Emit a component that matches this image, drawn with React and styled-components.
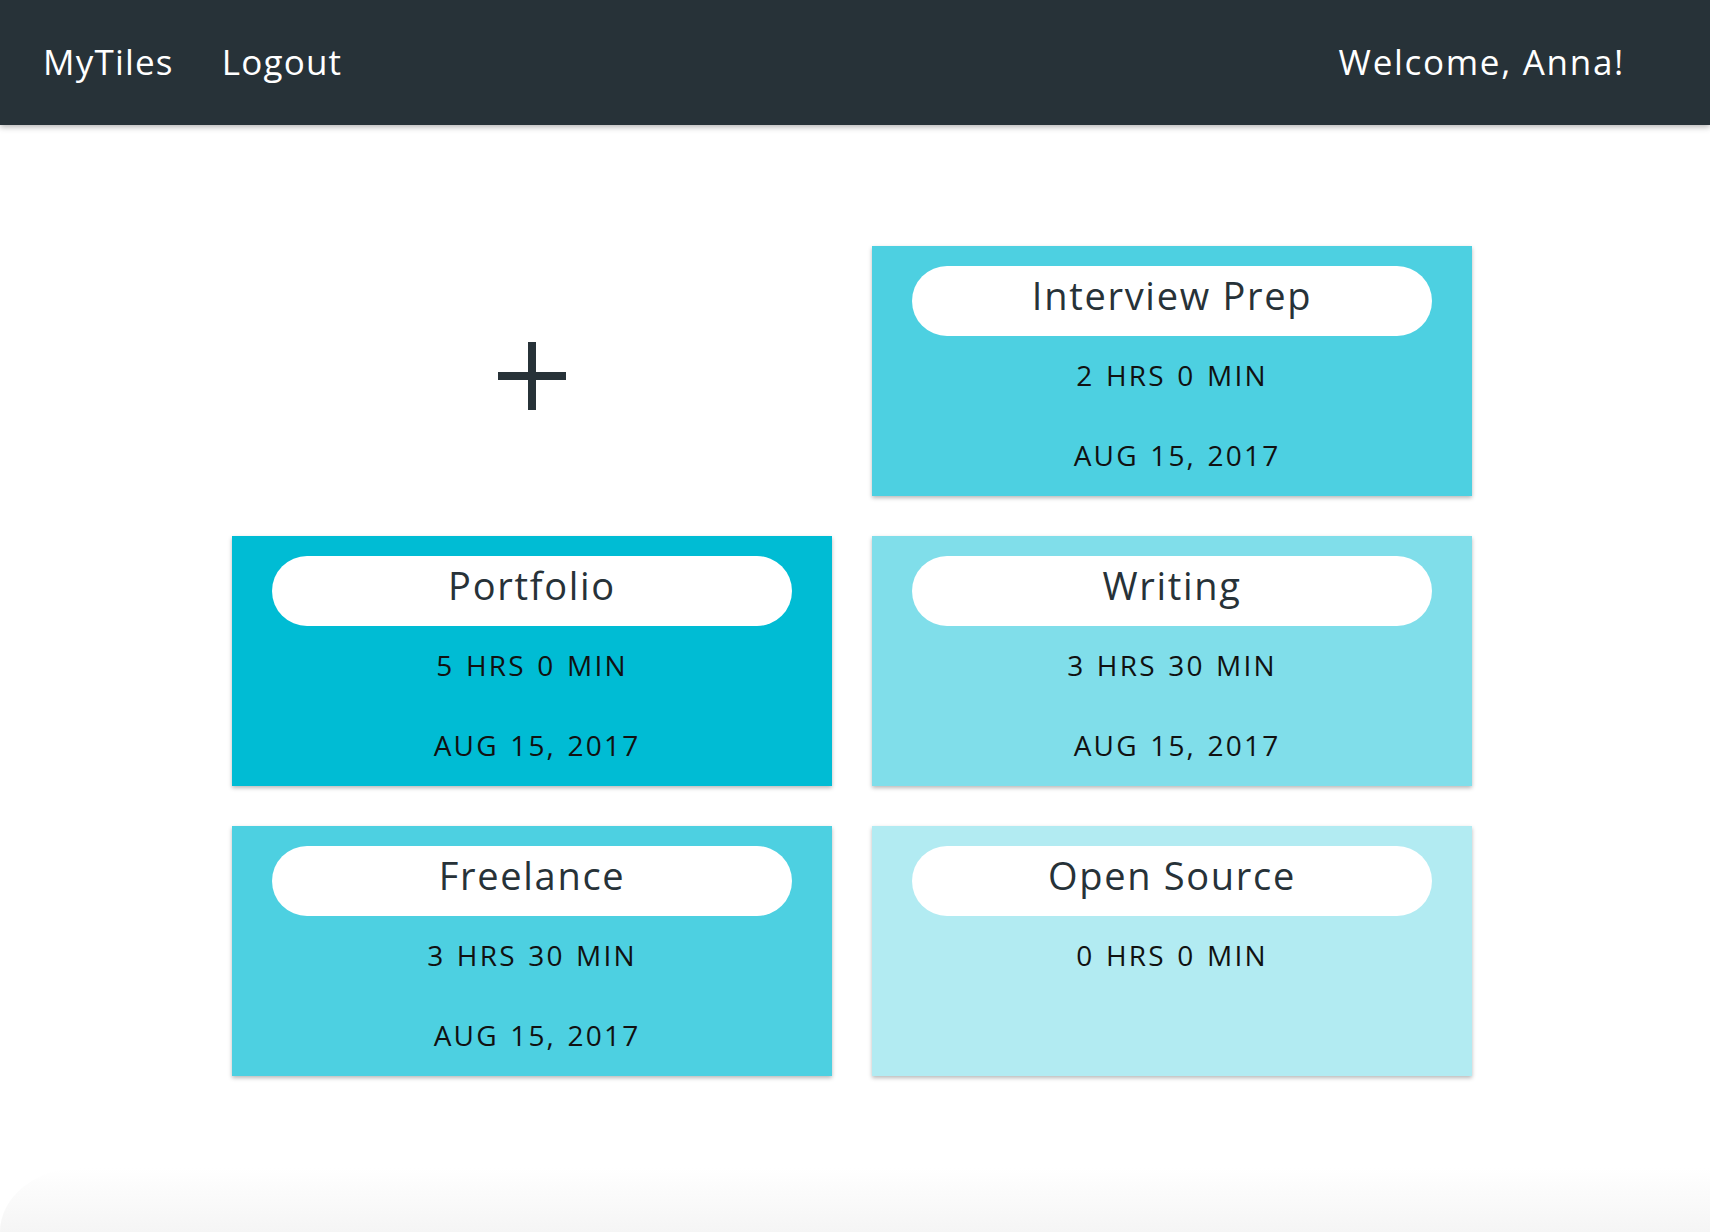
import styled, { createGlobalStyle } from 'styled-components';

const GlobalStyle = createGlobalStyle`
  html, body {
    margin: 0;
    padding: 0;
    background: #ffffff;
  }
  body {
    font-family: "Open Sans", "Noto Sans", Arial, sans-serif;
  }
  * {
    box-sizing: border-box;
  }
`;

const Page = styled.div`
  min-height: 100vh;
  display: flex;
  flex-direction: column;
`;

const NavBar = styled.header`
  height: 125px;
  background: #273238;
  display: flex;
  align-items: center;
  padding: 0 85px 2px 43px;
  box-shadow: 0 2px 6px rgba(0, 0, 0, 0.3);
  position: relative;
  z-index: 1;
`;

const NavLink = styled.a`
  color: #ffffff;
  font-size: 35px;
  font-weight: 400;
  text-decoration: none;
  margin-right: 48px;
  letter-spacing: 1.2px;
`;

const Welcome = styled.span`
  margin-left: auto;
  color: #ffffff;
  font-size: 35px;
  letter-spacing: 1.7px;
`;

const Main = styled.main`
  padding: 121px 6px 0 0;
  display: flex;
  justify-content: center;
`;

const Grid = styled.div`
  display: grid;
  grid-template-columns: repeat(2, 600px);
  grid-auto-rows: 250px;
  gap: 40px 40px;
`;

const AddTile = styled.button`
  background: transparent;
  border: none;
  display: flex;
  align-items: center;
  justify-content: center;
  padding: 10px 0 0;
  cursor: pointer;
`;

const Tile = styled.div`
  background: ${(p) => p.$color};
  box-shadow: 0 2px 4px rgba(0, 0, 0, 0.28);
  display: flex;
  flex-direction: column;
  align-items: center;
  padding-top: 20px;
`;

const Title = styled.div`
  width: 520px;
  height: 70px;
  border-radius: 35px;
  background: #ffffff;
  color: #273238;
  font-size: 38px;
  display: flex;
  align-items: center;
  justify-content: center;
  padding-bottom: 12px;
  letter-spacing: 1.7px;
`;

const Hours = styled.div`
  margin-top: 19px;
  font-size: 28px;
  letter-spacing: 2.2px;
  word-spacing: 2px;
  color: #111111;
  line-height: 40px;
`;

const DateText = styled(Hours)`
  margin-top: 40px;
  padding-left: 10px;
`;

const BottomFade = styled.div`
  margin-top: auto;
  height: 64px;
  background: linear-gradient(to bottom, rgba(245, 245, 245, 0), rgba(245, 245, 245, 1));
  border-top-left-radius: 80px 64px;
`;

const tiles = [
  { name: 'Interview Prep', hours: '2 HRS 0 MIN', date: 'AUG 15, 2017', color: '#4dd0e1' },
  { name: 'Portfolio', hours: '5 HRS 0 MIN', date: 'AUG 15, 2017', color: '#00bcd4' },
  { name: 'Writing', hours: '3 HRS 30 MIN', date: 'AUG 15, 2017', color: '#80deea' },
  { name: 'Freelance', hours: '3 HRS 30 MIN', date: 'AUG 15, 2017', color: '#4dd0e1' },
  { name: 'Open Source', hours: '0 HRS 0 MIN', date: null, color: '#b2ebf2' },
];

function PlusIcon() {
  return (
    <svg width="68" height="68" viewBox="0 0 68 68">
      <rect x="30" y="0" width="8" height="68" fill="#273238" />
      <rect x="0" y="30" width="68" height="8" fill="#273238" />
    </svg>
  );
}

export default function App() {
  return (
    <Page>
      <GlobalStyle />
      <NavBar>
        <NavLink href="#">MyTiles</NavLink>
        <NavLink href="#">Logout</NavLink>
        <Welcome>Welcome, Anna!</Welcome>
      </NavBar>
      <Main>
        <Grid>
          <AddTile aria-label="Add tile">
            <PlusIcon />
          </AddTile>
          {tiles.map((t) => (
            <Tile key={t.name} $color={t.color}>
              <Title>{t.name}</Title>
              <Hours>{t.hours}</Hours>
              {t.date && <DateText>{t.date}</DateText>}
            </Tile>
          ))}
        </Grid>
      </Main>
      <BottomFade />
    </Page>
  );
}
